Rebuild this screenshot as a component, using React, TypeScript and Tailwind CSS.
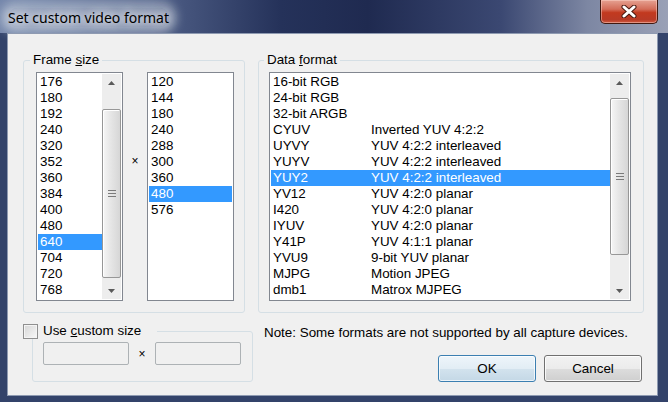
import React from "react";

const frameWidths = [176, 180, 192, 240, 320, 352, 360, 384, 400, 480, 640, 704, 720, 768];
const frameHeights = [120, 144, 180, 240, 288, 300, 360, 480, 576];

const formats: [string, string][] = [
  ["16-bit RGB", ""],
  ["24-bit RGB", ""],
  ["32-bit ARGB", ""],
  ["CYUV", "Inverted YUV 4:2:2"],
  ["UYVY", "YUV 4:2:2 interleaved"],
  ["YUYV", "YUV 4:2:2 interleaved"],
  ["YUY2", "YUV 4:2:2 interleaved"],
  ["YV12", "YUV 4:2:0 planar"],
  ["I420", "YUV 4:2:0 planar"],
  ["IYUV", "YUV 4:2:0 planar"],
  ["Y41P", "YUV 4:1:1 planar"],
  ["YVU9", "9-bit YUV planar"],
  ["MJPG", "Motion JPEG"],
  ["dmb1", "Matrox MJPEG"],
];

function Arrow({ down }: { down?: boolean }) {
  return (
    <div className="flex h-[17px] items-center justify-center">
      <svg width="7" height="4" viewBox="0 0 7 4">
        {down ? (
          <polygon points="0,0 7,0 3.5,4" fill="#5a5a5a" />
        ) : (
          <polygon points="0,4 7,4 3.5,0" fill="#5a5a5a" />
        )}
      </svg>
    </div>
  );
}

function ScrollBar({ offset, thumb }: { offset: number; thumb: number }) {
  return (
    <div className="flex w-[19px] flex-col bg-[#ededed]">
      <Arrow />
      <div style={{ height: offset }} />
      <div
        className="flex flex-col items-center justify-center rounded-[2px] border border-[#979797] bg-[linear-gradient(90deg,#f6f6f6,#e6e6e6_45%,#d6d6d6)] shadow-[inset_1px_1px_0_#fff]"
        style={{ height: thumb }}
      >
        <svg width="8" height="7" viewBox="0 0 8 7">
          <rect x="0" y="0" width="8" height="1" fill="#7a7a7a" />
          <rect x="0" y="3" width="8" height="1" fill="#7a7a7a" />
          <rect x="0" y="6" width="8" height="1" fill="#7a7a7a" />
        </svg>
      </div>
      <div className="flex-1" />
      <Arrow down />
    </div>
  );
}

function Row({ selected, children }: { selected?: boolean; children: React.ReactNode }) {
  return (
    <div
      className={
        selected
          ? "flex h-[16px] items-center bg-[#3399ff] pl-[2px] text-white"
          : "flex h-[16px] items-center pl-[2px] text-black"
      }
    >
      {children}
    </div>
  );
}

function Button({ label, primary }: { label: string; primary?: boolean }) {
  return (
    <div
      className={
        primary
          ? "flex h-[27px] w-[98px] items-center justify-center rounded-[3px] border border-[#3c7fb1] bg-[linear-gradient(#eef5fa_0%,#e2edf5_50%,#d3e3ee_50%,#c4d8e6_100%)] shadow-[inset_0_0_0_1px_rgba(255,255,255,0.7)]"
          : "flex h-[27px] w-[98px] items-center justify-center rounded-[3px] border border-[#707070] bg-[linear-gradient(#f2f2f2_0%,#ebebeb_50%,#dddddd_50%,#cfcfcf_100%)] shadow-[inset_0_0_0_1px_rgba(255,255,255,0.8)]"
      }
    >
      {label}
    </div>
  );
}

export default function App() {
  return (
    <div className="flex h-[402px] w-[668px] flex-col bg-[#33436a] font-['Liberation_Sans',Arial,sans-serif] text-[13.4px] leading-[16px] text-black">
      {/* title bar */}
      <div className="flex h-[33px] items-start bg-[linear-gradient(90deg,#7486ab_0%,#52628a_22%,#25325a_42%,#1f2a50_55%,#3b4872_75%,#7d87a3_88%,#9aa1b6_100%)]">
        <div className="flex-1 pl-[8px] pt-[8px]">
          <span className="rounded-[10px] bg-[#c9d0dc]/40 font-['Noto_Sans',sans-serif] text-[14px] leading-[20px] shadow-[0_0_10px_8px_rgba(205,212,225,0.45)] [text-shadow:0_0_8px_#fff,0_0_12px_#fff,0_0_16px_#e8ecf4]">
            Set custom video format
          </span>
        </div>
        <div className="mr-[10px] flex h-[24px] w-[58px] items-center justify-center rounded-b-[5px] border border-t-0 border-[#40180f] bg-[linear-gradient(#e6a292,#d36c58_40%,#c2391f_55%,#b83a26_85%,#d05a40)] shadow-[inset_0_0_0_1px_rgba(255,220,210,0.45)]">
          <svg width="16" height="13" viewBox="0 0 16 13">
            <path d="M3 2 L13 11 M13 2 L3 11" stroke="#4a1a12" strokeWidth="5" strokeLinecap="round" />
            <path d="M3 2 L13 11 M13 2 L3 11" stroke="#ffffff" strokeWidth="3" strokeLinecap="round" />
          </svg>
        </div>
      </div>

      {/* client */}
      <div className="ml-[7px] mr-[10px] h-[363px] border border-[#8e9ab1] bg-[#f0f0f0] pl-[15px] pt-[18px]">
        <div className="flex gap-[13px]">
          <fieldset className="w-[222px] rounded-[3px] border border-[#d5dfe5] p-0">
            <legend className="ml-[6px] px-[3px]">
              Frame <span className="underline">s</span>ize
            </legend>
            <div className="flex pb-[11px] pl-[12px] pr-[10px] pt-[4px]">
              <div className="flex h-[229px] w-[87px] border border-[#828790] bg-white p-[1px]">
                <div className="flex-1">
                  {frameWidths.map((w) => (
                    <Row key={w} selected={w === 640}>
                      {w}
                    </Row>
                  ))}
                </div>
                <ScrollBar offset={18} thumb={169} />
              </div>
              <div className="w-[24px] pt-[81px] text-center text-[12px]">×</div>
              <div className="h-[229px] w-[87px] border border-[#828790] bg-white p-[1px]">
                {frameHeights.map((h) => (
                  <Row key={h} selected={h === 480}>
                    {h}
                  </Row>
                ))}
              </div>
            </div>
          </fieldset>

          <fieldset className="w-[386px] rounded-[3px] border border-[#d5dfe5] p-0">
            <legend className="ml-[5px] px-[3px]">
              Data <span className="underline">f</span>ormat
            </legend>
            <div className="flex pb-[11px] pl-[10px] pr-[12px] pt-[4px]">
              <div className="flex h-[229px] w-[362px] border border-[#828790] bg-white p-[1px]">
                <div className="flex-1">
                  {formats.map(([code, desc]) => (
                    <Row key={code} selected={code === "YUY2"}>
                      <span className="w-[98px]">{code}</span>
                      <span>{desc}</span>
                    </Row>
                  ))}
                </div>
                <ScrollBar offset={7} thumb={157} />
              </div>
            </div>
          </fieldset>
        </div>

        <div className="mt-[10px] flex">
          <fieldset className="ml-[9px] w-[221px] rounded-[3px] border border-[#d5dfe5] p-0">
            <legend className="-ml-[10px] flex w-[134px] items-center gap-[5px] bg-[#f0f0f0]">
              <span className="h-[15px] w-[15px] border border-[#8f8f8f] bg-[linear-gradient(135deg,#d6d6d6,#f8f8f8)] shadow-[inset_0_0_0_1px_#f4f4f4]" />
              <span>
                Use <span className="underline">c</span>ustom size
              </span>
            </legend>
            <div className="flex items-center pb-[16px] pl-[10px] pr-[11px] pt-[3px]">
              <div className="h-[23px] w-[86px] rounded-[2px] border border-[#adb2b5] bg-[#f0f0f0]" />
              <div className="w-[26px] text-center text-[12px]">×</div>
              <div className="h-[23px] w-[86px] rounded-[2px] border border-[#adb2b5] bg-[#f0f0f0]" />
            </div>
          </fieldset>

          <div className="ml-[11px] flex w-[378px] flex-col pt-[2px]">
            <div>Note: Some formats are not supported by all capture devices.</div>
            <div className="mt-[14px] flex justify-end gap-[8px]">
              <Button label="OK" primary />
              <Button label="Cancel" />
            </div>
          </div>
        </div>
      </div>
    </div>
  );
}
